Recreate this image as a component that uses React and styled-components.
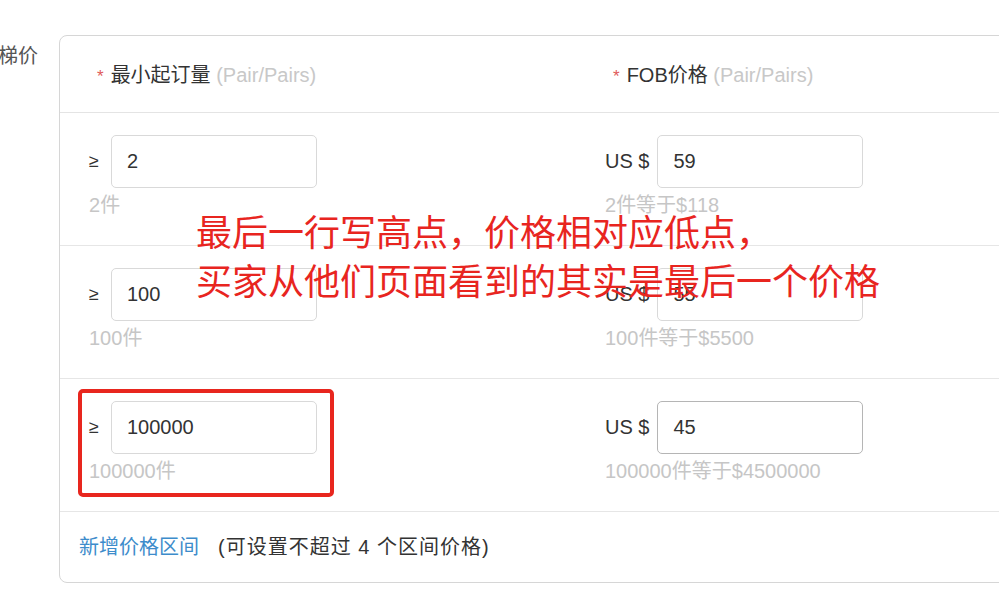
import React from "react";
import styled, { createGlobalStyle } from "styled-components";

const GlobalStyle = createGlobalStyle`
  html, body { margin: 0; padding: 0; overflow: hidden; background: #fff; }
  body {
    font-family: "Liberation Sans", "Noto Sans CJK SC", sans-serif;
    color: #333;
  }
`;

const Page = styled.div`
  position: relative;
  display: flex;
  align-items: flex-start;
  width: 999px;
  height: 600px;
  padding-top: 35px;
  box-sizing: border-box;
  overflow: hidden;
`;

const SideLabel = styled.div`
  width: 38px;
  flex-shrink: 0;
  display: flex;
  justify-content: flex-end;
  white-space: nowrap;
  margin-top: 9px;
  font-size: 20px;
  line-height: 24px;
  color: #555;
`;

const Panel = styled.div`
  margin-left: 21px;
  width: 1120px;
  flex-shrink: 0;
  border: 1px solid #d6d6d6;
  border-radius: 8px;
  box-sizing: border-box;
`;

const HeaderRow = styled.div`
  display: grid;
  grid-template-columns: 516px 516px;
  align-items: center;
  height: 77px;
  box-sizing: border-box;
  padding: 3px 0 0 29px;
  border-bottom: 1px solid #e4e4e4;
`;

const HeaderCell = styled.div`
  padding-left: 8px;
  font-size: 20px;
  line-height: 24px;
  white-space: nowrap;
`;

const Star = styled.span`
  color: #e05a5a;
  font-size: 17px;
  margin-right: 7px;
`;

const Unit = styled.span`
  color: #c8c8c8;
`;

const Row = styled.div`
  display: grid;
  grid-template-columns: 516px 516px;
  padding: 22px 0 28px 29px;
  border-bottom: 1px solid #e6e6e6;
`;

const Cell = styled.div`
  position: relative;
  display: flex;
  flex-direction: column;
`;

const InputLine = styled.div`
  display: flex;
  align-items: center;
`;

const Prefix = styled.span`
  min-width: ${(p) => p.$w}px;
  margin-right: ${(p) => p.$gap}px;
  font-size: ${(p) => p.$size}px;
  color: #333;
  white-space: nowrap;
`;

const Field = styled.input`
  width: 206px;
  height: 53px;
  box-sizing: border-box;
  padding: 0 15px;
  border: 1px solid ${(p) => (p.$active ? "#b5b5b5" : "#d9d9d9")};
  border-radius: 5px;
  font-family: "Liberation Sans", "Noto Sans CJK SC", sans-serif;
  font-size: 20px;
  color: #333;
  background: #fff;
  outline: none;
`;

const Helper = styled.div`
  margin-top: 5px;
  font-size: 20px;
  line-height: 24px;
  color: #c6c6c6;
  white-space: nowrap;
`;

const Highlight = styled.div`
  position: absolute;
  top: -12px;
  left: -11px;
  width: 256px;
  height: 108px;
  box-sizing: border-box;
  border: 4px solid #e8261e;
  border-radius: 5px;
  pointer-events: none;
`;

const Footer = styled.div`
  display: flex;
  align-items: center;
  height: 70px;
  box-sizing: border-box;
  padding: 0 0 4px 19px;
  font-size: 20px;
  white-space: nowrap;
`;

const AddLink = styled.a`
  color: #3d8ccb;
  text-decoration: none;
  cursor: pointer;
`;

const Note = styled.span`
  margin-left: 19px;
  letter-spacing: 1px;
  color: #333;
`;

const Annotation = styled.div`
  position: absolute;
  left: 196px;
  top: 206px;
  z-index: 2;
  font-family: "Noto Sans CJK SC", sans-serif;
  font-size: 36px;
  line-height: 49px;
  color: #e8251f;
  white-space: nowrap;
`;

const rows = [
  { qty: "2", price: "59", total: "118" },
  { qty: "100", price: "55", total: "5500" },
  { qty: "100000", price: "45", total: "4500000", highlight: true },
];

export default function App() {
  return (
    <>
      <GlobalStyle />
      <Page>
        <SideLabel>
          <span>阶梯价</span>
        </SideLabel>
        <Panel>
          <HeaderRow>
            <HeaderCell>
              <Star>*</Star>最小起订量 <Unit>(Pair/Pairs)</Unit>
            </HeaderCell>
            <HeaderCell>
              <Star>*</Star>FOB价格 <Unit>(Pair/Pairs)</Unit>
            </HeaderCell>
          </HeaderRow>
          {rows.map((r) => (
            <Row key={r.qty}>
              <Cell>
                <InputLine>
                  <Prefix $w={12} $gap={10} $size={18}>≥</Prefix>
                  <Field defaultValue={r.qty} readOnly />
                </InputLine>
                <Helper>{r.qty}件</Helper>
                {r.highlight && <Highlight />}
              </Cell>
              <Cell>
                <InputLine>
                  <Prefix $w={0} $gap={8} $size={20}>US $</Prefix>
                  <Field defaultValue={r.price} readOnly $active={r.highlight} />
                </InputLine>
                <Helper>
                  {r.qty}件等于${r.total}
                </Helper>
              </Cell>
            </Row>
          ))}
          <Footer>
            <AddLink>新增价格区间</AddLink>
            <Note>(可设置不超过 4 个区间价格)</Note>
          </Footer>
        </Panel>
        <Annotation>
          最后一行写高点，价格相对应低点，
          <br />
          买家从他们页面看到的其实是最后一个价格
        </Annotation>
      </Page>
    </>
  );
}
